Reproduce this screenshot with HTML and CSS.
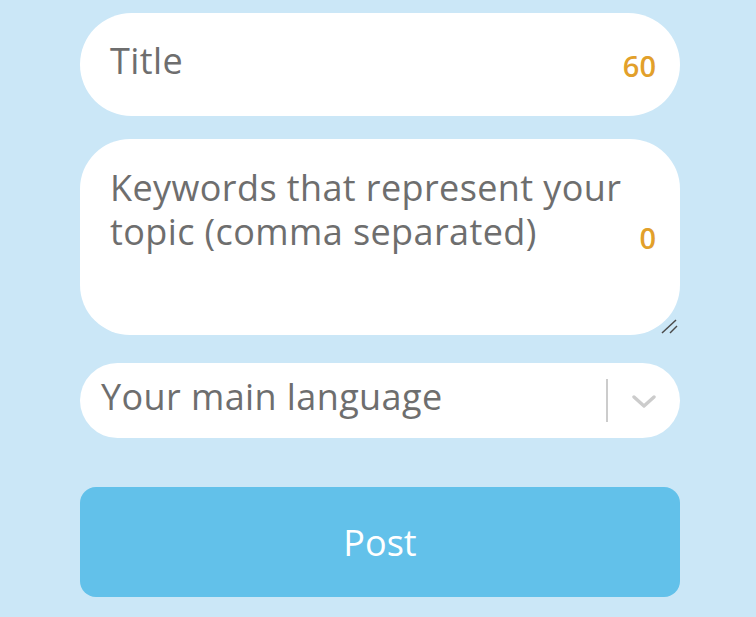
FILE: index.html
```html
<!DOCTYPE html>
<html lang="en">
<head>
<meta charset="utf-8">
<title>Post form</title>
<link rel="stylesheet" href="styles.css">
</head>
<body>
<main class="form">
  <div class="field title-field">
    <span class="placeholder title-ph">Title</span>
    <span class="counter title-count">60</span>
  </div>
  <div class="area-wrap">
    <div class="field area">
      <span class="placeholder area-ph">Keywords that represent your topic (comma separated)</span>
      <span class="counter area-count">0</span>
    </div>
    <svg class="grip" width="18" height="15" viewBox="0 0 18 15">
      <line x1="1" y1="14" x2="15" y2="1" stroke="#4a4a4a" stroke-width="1.5"/>
      <line x1="9" y1="14" x2="16" y2="7" stroke="#4a4a4a" stroke-width="1.5"/>
    </svg>
  </div>
  <div class="select">
    <span class="placeholder select-ph">Your main language</span>
    <div class="indicators">
      <span class="sep"></span>
      <svg class="chev" width="24" height="14" viewBox="0 0 24 14">
        <polyline points="2,2 12,11 22,2" fill="none" stroke="#cccccc" stroke-width="3.4" stroke-linecap="round" stroke-linejoin="round"/>
      </svg>
    </div>
  </div>
  <button class="post">Post</button>
</main>
</body>
</html>
```
FILE: styles.css
```css
html, body {
  margin: 0;
  padding: 0;
  background: #cbe7f7;
}
body {
  font-family: "Open Sans", "Noto Sans", sans-serif;
  width: 756px;
  height: 617px;
  overflow: hidden;
}
.form {
  width: 600px;
  margin-left: 80px;
  padding-top: 13px;
  display: flex;
  flex-direction: column;
}
.field {
  background: #ffffff;
  display: flex;
  align-items: flex-start;
  justify-content: space-between;
  box-sizing: border-box;
}
.placeholder {
  color: #6e6e6e;
  font-size: 36px;
  letter-spacing: 0.4px;
}
.counter {
  color: #e2a02a;
  font-size: 29px;
  font-weight: 600;
  line-height: 32px;
}
.title-field {
  height: 103px;
  border-radius: 52px;
  padding: 28px 24px 0 30px;
}
.title-ph {
  line-height: 40px;
}
.title-count {
  margin-top: 9px;
}
.area-wrap {
  position: relative;
  margin-top: 23px;
  height: 196px;
}
.area {
  height: 196px;
  border-radius: 50px;
  padding: 27px 24px 0 30px;
}
.area-ph {
  line-height: 44px;
  width: 520px;
}
.area-count {
  margin-top: 56px;
}
.grip {
  position: absolute;
  right: 1px;
  bottom: 1px;
}
.select {
  margin-top: 28px;
  height: 75px;
  border-radius: 38px;
  background: #ffffff;
  display: flex;
  justify-content: space-between;
  box-sizing: border-box;
  padding-left: 21px;
}
.select-ph {
  line-height: 40px;
  margin-top: 14px;
}
.indicators {
  display: flex;
  align-items: center;
  padding-right: 24px;
}
.sep {
  width: 2px;
  height: 43px;
  background: #cccccc;
  margin-right: 24px;
}
.chev {
  display: block;
  margin-top: 2px;
}
.post {
  margin-top: 49px;
  height: 110px;
  border: none;
  border-radius: 16px;
  background: #62c1ea;
  color: #ffffff;
  font-family: "Open Sans", "Noto Sans", sans-serif;
  font-size: 36px;
  padding: 0;
}
```
